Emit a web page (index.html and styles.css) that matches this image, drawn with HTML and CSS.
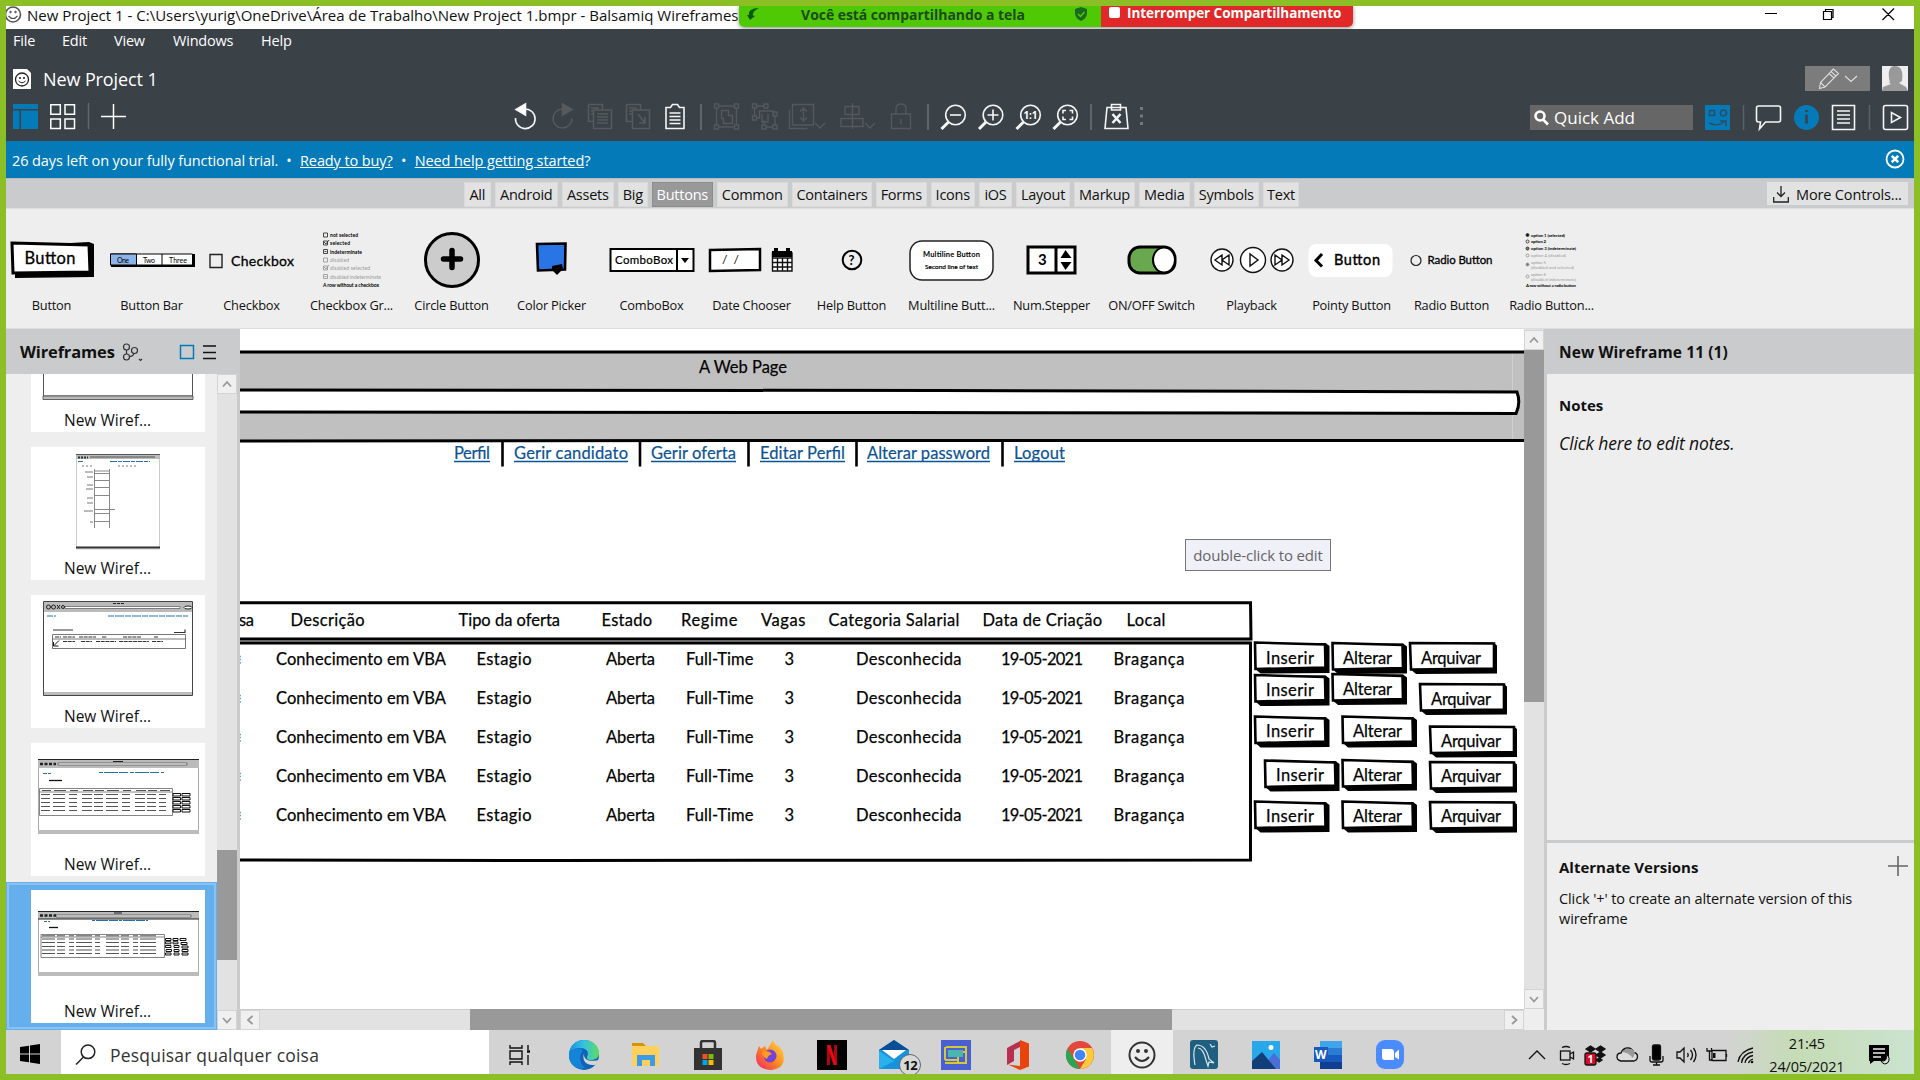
FILE: index.html
```html
<!DOCTYPE html>
<html lang="pt">
<head>
<meta charset="utf-8">
<title>New Project 1 - Balsamiq Wireframes</title>
<link rel="stylesheet" href="styles.css">
</head>
<body>
<div class="screen">

<div class="titlebar">
  <svg class="app-face" width="16" height="23" viewBox="6 6 16 23" fill="none" stroke="#555"><circle cx="13" cy="14.500" r="7.500" stroke-width="1.600"/><path d="M8.500 16q4.500 5 9 0" stroke-width="1.200"/><circle cx="10.500" cy="12" r=".8" fill="#555"/><circle cx="15.500" cy="12" r=".8" fill="#555"/></svg>
  <span class="title-text">New Project 1 - C:\Users\yurig\OneDrive\Área de Trabalho\New Project 1.bmpr - Balsamiq Wireframes</span>
  <div class="share">
    <div class="share-on">
      <svg width="14" height="14" viewBox="0 0 14 14"><path d="M13 1C6 1 2 4 3 8L1 8l3 5 5-4-2-.5C6.500 6 8 3.500 13 1z" fill="#0b5a0b"/></svg>
      <span>Você está compartilhando a tela</span>
      <svg width="14" height="16" viewBox="0 0 14 16"><path d="M7 1l6 2v5q-1 5-6 7-5-2-6-7V3z" fill="#1b6a1b"/><path d="M4 8l2.500 2.500L10.500 6" fill="none" stroke="#4fc90a" stroke-width="1.500"/></svg>
    </div>
    <div class="share-stop"><i></i><span>Interromper Compartilhamento</span></div>
  </div>
  <svg class="winctl" width="160" height="23" viewBox="1754 6 160 23" fill="none" stroke="#000" stroke-width="1.200"><path d="M1765 13.500h12M1823.500 11.500h8v8h-8zM1825.500 11V9.500h7.500v8h-1.500M1882.500 8.500l11.500 11.500M1894 8.500l-11.500 11.500"/></svg>
</div>

<header class="header">
  <nav class="menu"><span>File</span><span>Edit</span><span>View</span><span>Windows</span><span>Help</span></nav>
  <div class="project">
    <svg width="18" height="20" viewBox="0 0 18 20"><path d="M0 0h14l4 4v16H0z" fill="#fff"/><circle cx="9" cy="10.500" r="6.500" fill="none" stroke="#222" stroke-width="1.300"/><path d="M5.500 12q3.500 3.500 7 0" fill="none" stroke="#222"/><circle cx="7" cy="9" r=".9"/><circle cx="11" cy="9" r=".9"/></svg>
    <span class="project-name">New Project 1</span>
    <div class="pen"><svg width="40" height="22" viewBox="0 0 40 22" fill="none" stroke="#ddd" stroke-width="1.100"><path d="M1.500 20.500l1-6L13 3.500l5 4.500L7 19zM11 5.500l5 4.500M13 3.500l2.500-2.500 5 4.500L18 8M2.500 14.500L7 19M27 8l6 5.500L39 8"/></svg></div>
    <svg width="26" height="25" viewBox="0 0 26 25"><path d="M0 0h26v25H0z" fill="#eee"/><path d="M8 17Q4 0 13 0q9 0 7 15l-3 2 7 4 2 4H0l1-4 8-3-4-2z" fill="#999"/></svg>
  </div>
  <div class="toolbar">
    <svg class="tb-left" width="120" height="34" viewBox="10 100 120 34"><path d="M13 104h25v5H13zM13 110.500h6.500V129H13zM21 110.500h17V129H21z" fill="#057ab9"/><g fill="none" stroke="#fff" stroke-width="1.500"><path d="M50.800 104.800h9.500v9.500h-9.500zM65 104.800h9.500v9.500H65zM50.800 119h9.500v9.500h-9.500zM65 119h9.500v9.500H65zM113.500 104v25M101 116.500h25"/><path d="M88.500 103v26" stroke="#666"/></g></svg>
    <svg class="tb-mid" width="646" height="34" viewBox="506 100 646 34" fill="none" stroke="#f5f5f5" stroke-width="1.600">
      <path d="M515.500 118a9.800 9.800 0 1 0 9.500-9"/><path d="M525.500 104v11l-9.500-5.500z" fill="#fff"/>
      <g stroke="#565a5d"><path d="M572 118.500a9.500 9.500 0 1 1-9-9.500"/><path d="M562.500 104v11l9.500-5.500z" fill="#565a5d"/>
      <path d="M588.500 104.500h14v5M588.500 104.500v17h4M591 108h8M591 111h3M591 114h3M593.500 110h18v18.500h-18zM597 114h11M597 117h11M597 120h11M597 123h11"/>
      <path d="M626.500 104.500h14v5M626.500 104.500v17h5M629 108h8M629 111h4M629 114h4M632.500 110h17v18.500h-17zM638 114l7 9M645 117v6h-6"/></g>
      <path d="M666 107.500h4.500l2-3h5l2 3h4.500v21h-18zM669.500 113h11M669.500 116.500h11M669.500 120h11M669.500 123.500h11"/>
      <g stroke="#6a6f73"><path d="M701 104v26M928 104v26M1091 104v26"/></g>
      <g stroke="#54585c" stroke-width="1.400"><path d="M714.500 104h4v4h-4zM734.500 104h4v4h-4zM714.500 125h4v4h-4zM734.500 125h4v4h-4zM718.500 106h16M718.500 127h16M716.500 108v17M736.500 108v17M721.500 110.500h7v5h4v8h-9v-5h-2z"/>
      <path d="M752.500 104h4v4h-4zM764 104h4v4h-4zM752.500 116h4v4h-4zM756.500 106h7.500M754.500 108v8M756.500 118h3v-7h14v4M762 125h4v4h-4zM773 125h4v4h-4zM773 112h4v4h-4zM764 120v5M766 127h7M775 116v9M762 114v8h6v-8"/>
      <path d="M792.500 104.500h21V125h-21zM789.500 110v18.500h18M803.500 108v13M800 111.500l3.500-3.500 3.500 3.500M800 117.500l3.500 3.500 3.500-3.500M815 123l5 5 5-5"/>
      <path d="M852.500 103v26M845 106.500h14v8h-14zM841 118.500h22v8h-22zM865 123l5 5 5-5"/>
      <path d="M891.500 114h19v14.500h-19zM896 114v-5q0-5 5-5t5 5v5M901 119v5"/></g>
      <g><circle cx="955.500" cy="115" r="9.800"/><path d="M948.500 122l-7 7" stroke-width="3"/><path d="M950 115h11"/><circle cx="993" cy="115" r="9.800"/><path d="M986 122l-7 7" stroke-width="3"/><path d="M987.500 115h11M993 109.500v11"/><circle cx="1030.500" cy="115" r="9.800"/><path d="M1023.500 122l-7 7" stroke-width="3"/><circle cx="1067.500" cy="115" r="9.800"/><path d="M1060.500 122l-7 7" stroke-width="3"/><path d="M1066 110.500h-3v3M1069.500 110.500h3v3M1066 119.500h-3v-3M1069.500 119.500h3v-3"/></g>
      <text x="1023.500" y="118.500" textLength="14" font-size="10" font-weight="700" fill="#fff" stroke="none">1:1</text>
      <path d="M1107 107.500h19l2 21h-23zM1111.500 110v-5.500h9v5.500z"/><path d="M1112.500 114l8 9M1120.500 114l-8 9" stroke-width="2.600"/>
      <path d="M1141.500 107v3M1141.500 114.500v3M1141.500 122v3" stroke="#777" stroke-width="3"/>
    </svg>
    <div class="quick"><svg width="15" height="16" viewBox="0 0 15 16" fill="none" stroke="#fff" stroke-width="2.600"><circle cx="6" cy="6" r="4.500"/><path d="M9 9.500l5 5"/></svg><span>Quick Add</span></div>
    <svg class="tb-right" width="210" height="34" viewBox="1700 100 210 34" fill="none" stroke="#f5f5f5" stroke-width="1.600"><path d="M1705 105h25v25h-25z" fill="#057ab9" stroke="none"/><g stroke="#2d4d63"><path d="M1709.500 110.500h5v5h-5z"/><circle cx="1723.500" cy="113" r="3"/><path d="M1709 123q9 4 15-1M1720 121h6v5"/></g><path d="M1743.500 105v25M1869.500 105v25" stroke="#5b6064"/><path d="M1758.500 106h20q2 0 2 2v12q0 2-2 2h-13l-6 7 1-7h-2q-2 0-2-2v-12q0-2 2-2z"/><circle cx="1806.500" cy="117.500" r="12.500" fill="#057ab9" stroke="none"/><path d="M1806.500 114.500v9M1806.500 110v2" stroke="#39434a" stroke-width="2.600"/><path d="M1832.500 105.500h22v24h-22zM1837 111h13M1837 115h13M1837 119h13M1837 123h13"/><rect x="1883.500" y="105.500" width="24" height="24" rx="2"/><path d="M1891.500 112.500v10l9-5z"/></svg>
  </div>
</header>

<div class="trial"><span class="days">26 days left on your fully functional trial.</span><span class="dot">•</span><u>Ready to buy?</u><span class="dot">•</span><span><u>Need help getting started</u>?</span>
  <svg width="20" height="20" viewBox="0 0 20 20" fill="none" stroke="#fff"><circle cx="10" cy="10" r="8.500" stroke-width="1.800"/><path d="M6.800 6.800l6.400 6.400M13.200 6.800l-6.400 6.400" stroke-width="2.600"/></svg></div>

<div class="tabs">
  <div class="tab-list"><b>All</b><b>Android</b><b>Assets</b><b>Big</b><b class="on">Buttons</b><b>Common</b><b>Containers</b><b>Forms</b><b>Icons</b><b>iOS</b><b>Layout</b><b>Markup</b><b>Media</b><b>Symbols</b><b>Text</b></div>
  <div class="more"><svg width="16" height="17" viewBox="0 0 16 17" fill="none" stroke="#222" stroke-width="1.300"><path d="M8 0v10M4 6.500l4 4 4-4M.7 11v5h14.600v-5"/></svg><span>More Controls...</span></div>
</div>

<div class="palette">
  <div class="ctl"><svg viewBox="0 0 100 80"><path d="M14 58l79-1V24l-5-2-74 4z"/><path d="M11 23l77 2 1 27-77 1z" fill="#fff" stroke="#000" stroke-width="3"/><text x="23.500" y="44" textLength="51" font-size="16.500" stroke="#000" stroke-width=".3">Button</text></svg><span>Button</span></div>
  <div class="ctl"><svg viewBox="0 0 100 80"><path d="M10 34h84v13H10z"/><path d="M9.500 34h82v11h-82z" fill="#fff" stroke="#000"/><path d="M9.500 34h26v11h-26z" fill="#8db4ea" stroke="#000"/><path d="M61 34v11" stroke="#000"/><text x="16" y="42.500" textLength="12" font-size="7">One</text><text x="42" y="42.500" textLength="12" font-size="7">Two</text><text x="68" y="42.500" textLength="18" font-size="7">Three</text></svg><span>Button Bar</span></div>
  <div class="ctl"><svg viewBox="0 0 100 80"><path d="M9 34.500h12v13H9z" fill="none" stroke="#222" stroke-width="1.400"/><text x="30" y="45.500" textLength="63" font-size="14" stroke="#000" stroke-width=".3">Checkbox</text></svg><span>Checkbox</span></div>
  <div class="ctl"><svg viewBox="0 0 100 80"><g font-size="5" font-weight="700"><text x="29" y="17" textLength="28">not selected</text><text x="29" y="25" textLength="20">selected</text><text x="29" y="33.500" textLength="32">indeterminate</text><g fill="#999" font-weight="400"><text x="29" y="42" textLength="19">disabled</text><text x="29" y="50" textLength="40">disabled selected</text><text x="29" y="58.500" textLength="51">disabled indeterminate</text></g><text x="22" y="66.500" textLength="56">A row without a checkbox</text></g><g fill="none" stroke="#333" stroke-width=".9"><path d="M22.500 13h4v4h-4zM22.500 21h4v4h-4zM22.500 29.500h4v4h-4zM23 22l2 2 3-4M23.500 31.500h2"/><path d="M22.500 38h4v4h-4zM22.500 46h4v4h-4zM22.500 54.500h4v4h-4zM23 47l2 2 3-4M23.500 56.500h2" stroke="#999"/></g></svg><span>Checkbox Gr...</span></div>
  <div class="ctl"><svg viewBox="0 0 100 80"><circle cx="51" cy="40" r="26.500" fill="#ccc" stroke="#000" stroke-width="3"/><path d="M51 30.500v17M42.500 39h17" stroke="#000" stroke-width="5.500" stroke-linecap="round"/></svg><span>Circle Button</span></div>
  <div class="ctl"><svg viewBox="0 0 100 80"><path d="M36 24l28.500-.5-.5 26-27 1z" fill="#2a75e6" stroke="#000" stroke-width="2.600"/><path d="M51 46l10-2 1 5-6 6-5-5z"/></svg><span>Color Picker</span></div>
  <div class="ctl"><svg viewBox="0 0 100 80"><path d="M9.500 29h83v22h-83zM76 29v22" fill="#fff" stroke="#000" stroke-width="2"/><path d="M80 38h8l-4 5z"/><text x="14" y="44" textLength="58" font-size="11.500" stroke="#000" stroke-width=".2">ComboBox</text></svg><span>ComboBox</span></div>
  <div class="ctl"><svg viewBox="0 0 100 80"><path d="M9 30l50-1v21l-50 1z" fill="#fff" stroke="#000" stroke-width="2.500"/><text x="21" y="44" textLength="17" font-size="12">/ /</text><path d="M71.500 33h19.500v18H71.500zM71.500 38H91M71.500 42.500H91M71.500 47H91M76.500 38v13M81.500 38v13M86.500 38v13" fill="#fff" stroke="#111" stroke-width="1.400"/><path d="M71 31h20v6H71zM73 28h4v5h-4zM85 28h4v5h-4z"/></svg><span>Date Chooser</span></div>
  <div class="ctl"><svg viewBox="0 0 100 80"><circle cx="51" cy="40" r="9.300" fill="none" stroke="#000" stroke-width="2"/><text x="47.500" y="44.500" font-size="13" font-weight="700">?</text></svg><span>Help Button</span></div>
  <div class="ctl"><svg viewBox="0 0 100 80"><rect x="9" y="21" width="83" height="39" rx="12" fill="#fff" stroke="#222" stroke-width="1.500"/><text x="22" y="37" textLength="57" font-size="7.500" font-weight="700">Multiline Button</text><text x="24" y="49" textLength="53" font-size="6.500" stroke="#000" stroke-width=".2">Second line of text</text></svg><span>Multiline Butt...</span></div>
  <div class="ctl"><svg viewBox="0 0 100 80"><path d="M27 27h47v26H27zM55 27v26" fill="#fff" stroke="#000" stroke-width="3"/><path d="M59.500 38l5-8 6 8zM59.500 42h11l-6 8z"/><text x="37" y="45" font-size="15" font-weight="700">3</text></svg><span>Num.Stepper</span></div>
  <div class="ctl"><svg viewBox="0 0 100 80"><rect x="28" y="27" width="46" height="26" rx="11" fill="#6aa84f" stroke="#000" stroke-width="3"/><ellipse cx="63" cy="40" rx="11" ry="12.500" fill="#fff" stroke="#000" stroke-width="2"/></svg><span>ON/OFF Switch</span></div>
  <div class="ctl"><svg viewBox="0 0 100 80"><g fill="#fff" stroke="#111" stroke-width="1.400"><circle cx="21" cy="40" r="11"/><circle cx="52" cy="40" r="12.500"/><circle cx="81" cy="40" r="11"/><path d="M21 35v10l-7-5zM28 35v10l-7-5zM49 34v12l8-6zM74 35v10l7-5zM81 35v10l7-5z"/></g></svg><span>Playback</span></div>
  <div class="ctl"><svg viewBox="0 0 100 80"><rect x="7.500" y="24" width="84" height="33" rx="8" fill="#fff"/><path d="M21 34l-6 6.500 6 6" fill="none" stroke="#000" stroke-width="3"/><text x="33" y="44.500" textLength="46" font-size="14.500" stroke="#000" stroke-width=".4">Button</text></svg><span>Pointy Button</span></div>
  <div class="ctl"><svg viewBox="0 0 100 80"><circle cx="15" cy="40.500" r="5" fill="none" stroke="#222" stroke-width="1.200"/><text x="26.500" y="44" textLength="65" font-size="11.500" stroke="#000" stroke-width=".3">Radio Button</text></svg><span>Radio Button</span></div>
  <div class="ctl"><svg viewBox="0 0 100 80"><g font-size="4.300" font-weight="700"><text x="30" y="16.500" textLength="34">option 1 (selected)</text><text x="30" y="23" textLength="15">option 2</text><text x="30" y="30" textLength="45">option 3 (indeterminate)</text><g fill="#999" font-weight="400"><text x="30" y="37" textLength="35">option 4 (disabled)</text><text x="30" y="43.500" textLength="15">option 5</text><text x="30" y="48.500" textLength="43">(disabled and selected)</text><text x="30" y="55.500" textLength="15">option 6</text><text x="30" y="60.500" textLength="45">(disabled indeterminate)</text></g><text x="25" y="66.500" textLength="50">A row without a radio button</text></g><g fill="none" stroke="#333" stroke-width=".9"><circle cx="26.500" cy="15" r="1.500" fill="#111"/><circle cx="26.500" cy="21.500" r="1.500"/><circle cx="26.500" cy="28.500" r="1.500" fill="#777"/></g><g fill="none" stroke="#999" stroke-width=".9"><circle cx="26.500" cy="35.500" r="1.500"/><circle cx="26.500" cy="44.500" r="1.500" fill="#777"/><circle cx="26.500" cy="56.500" r="1.500"/></g></svg><span>Radio Button...</span></div>
</div>

<div class="main">
  <aside class="left">
    <div class="left-head"><span>Wireframes</span><svg width="100" height="24" viewBox="120 339 100 24" fill="none" stroke="#333" stroke-width="1.200"><circle cx="126.500" cy="346" r="3"/><circle cx="134.500" cy="349.500" r="3"/><circle cx="126.500" cy="356" r="3"/><path d="M126.500 349v4M134 352.500q-1 3-5 3M139 358l1.500 1.500 1.500-1.500"/><path d="M180.500 344.500h13v13h-13z" stroke="#057ab9" stroke-width="1.500"/><path d="M203 345h13M203 351.500h13M203 357.500h13" stroke="#111" stroke-width="1.600"/></svg></div>
    <div class="left-body">
      <div class="thumbs">
        <div class="item"><div class="card"><svg width="174" height="104" viewBox="31 299 174 104"><path d="M43.500 299v97h149v-97" fill="none" stroke="#555"/><path d="M43 396h150v3.500H43z" fill="#bbb" stroke="#444" stroke-width=".8"/></svg><span>New Wiref...</span></div></div>
        <div class="item"><div class="card"><svg width="174" height="104" viewBox="31 447 174 104" fill="none"><path d="M76.500 454v95h83v-95" stroke="#ccc"/><path d="M76 454h84v5H76z" fill="#bbb"/><path d="M76 454.500h84M90 457h65" stroke="#555"/><path d="M78 457.500h10" stroke="#333" stroke-width="2" stroke-dasharray="2 1"/><path d="M78 461.500h5M110 461.500h40" stroke="#2471b0" stroke-dasharray="7 1 4 1"/><path d="M82 466h11M118 466h20" stroke="#777" stroke-dasharray="2 2"/><path d="M94.500 469v59M109.500 469v59M94 471h16M94 473.500h16M94 480.500h16M94 487.500h16M94 495.500h16M94 509.500h21M94 513.500h16M94 521.500h16" stroke="#888"/><path d="M85 472h8M87 477h6M87 485h6M86 489h7M87 498h6M87 503h6M84 511h9M90 522h3" stroke="#777" stroke-width="1.200"/><path d="M76 547.500h84" stroke="#333" stroke-width="2"/></svg><span>New Wiref...</span></div></div>
        <div class="item"><div class="card"><svg width="174" height="104" viewBox="31 595 174 104" fill="none"><path d="M43.500 601.500h149v94h-149z" stroke="#444"/><path d="M44 602h148v10H44zM44 692h148v3H44z" fill="#bbb"/><path d="M65 606.500h115v2H65z" fill="#fff" stroke="#555" stroke-width=".7"/><g stroke="#222"><circle cx="48.500" cy="607" r="2"/><circle cx="53.500" cy="607" r="2"/><path d="M57 605l3 4M60 605l-3 4"/><circle cx="63" cy="607" r="1.500"/><ellipse cx="188" cy="607.500" rx="4" ry="1.500" fill="#fff"/><path d="M113 603.500h11" stroke-dasharray="3 1"/></g><path d="M47 616h9M108 616h80" stroke="#2471b0" stroke-dasharray="6 1 9 1"/><path d="M53 630h20M174 632.500h11v-3" stroke="#333" stroke-width="1.200"/><path d="M52.500 634.500h133v14h-133zM52 639h134" stroke="#555" stroke-width=".8"/><path d="M55 637h6M63 637h12M79 637h17M102 637h5M123 637h18M154 637h4M63 641.500h12M81 641.500h11M96 641.500h20M119 641.500h30M152 641.500h11" stroke="#333" stroke-dasharray="4 .7"/><path d="M54 645.500l5-5M53.500 642v4h5" stroke="#111"/></svg><span>New Wiref...</span></div></div>
        <div class="item"><div class="card"><svg width="174" height="104" viewBox="31 742 174 104" fill="none"><path d="M38.500 758.500h160v74h-160z" stroke="#aaa"/><path d="M38 759h161v8H38zM38 829h161v4H38z" fill="#bbb"/><path d="M38 758.500h161M113 760.500h10" stroke="#222"/><path d="M58 762h129v2H58z" fill="#fff" stroke="#444" stroke-width=".7"/><path d="M40 763h16" stroke="#222" stroke-width="2.500" stroke-dasharray="3 1.500"/><path d="M43 772.500h8M99 771.500h65" stroke="#2471b0" stroke-dasharray="4 1 14 1 9 2"/><path d="M49 779.500h13" stroke="#111" stroke-width="1.300"/><path d="M39.500 787.500h133v27h-133zM39 791h133" stroke="#666" stroke-width=".8"/><g stroke="#555" stroke-dasharray="9 3 12 4 8 5 10 2"><path d="M42 789.500h128"/><path d="M41 793.500h125M41 797.500h125M41 801.500h125M41 805.500h125M41 809.500h125"/></g><g fill="#fff" stroke="#111"><path d="M173 792.500h7.500v2.500H173zM182 792.500h8v2.500h-8zM173 796.500h7.500v2.500H173zM182 796.500h8v2.500h-8zM173 800.500h7.500v2.500H173zM182 800.500h8v2.500h-8zM173 804.500h7.500v2.500H173zM182 804.500h8v2.500h-8zM173 808.500h7.500v2.500H173zM182 808.500h8v2.500h-8z"/></g></svg><span>New Wiref...</span></div></div>
        <div class="item sel"><div class="card"><svg width="174" height="104" viewBox="31 890 174 104" fill="none"><path d="M38.500 911.500h160v64h-160z" stroke="#aaa"/><path d="M38 912h161v7H38zM38 972h161v4H38z" fill="#bbb"/><path d="M38 911.500h161M114 913h8M38 919h161" stroke="#222"/><path d="M56 915h135v2H56z" fill="#fff" stroke="#444" stroke-width=".7"/><path d="M40 915.500h16" stroke="#222" stroke-width="2.500" stroke-dasharray="3 1.500"/><path d="M44 921.500h6M92 920.500h56" stroke="#2471b0" stroke-dasharray="3 1 12 1 9 1"/><path d="M49 927.500h9" stroke="#111" stroke-width="1.300"/><path d="M41 934.500h123.500v23H41zM41 937h123" stroke="#666" stroke-width=".8"/><g stroke="#555" stroke-dasharray="13 2 8 4 5 2 16 3 5 6"><path d="M42 935.800h116"/><path d="M42 939h116M42 942.500h116M42 946.500h116M42 950h116M42 953.500h116"/></g><g fill="#fff" stroke="#111"><path d="M165.500 938.500h5.500v2h-5.500zM173 938.500h5v2h-5zM180 938.500h6v2h-6zM165.500 941.800h5.500v2h-5.500zM173 941.800h5v2h-5zM181 942.500h6v2h-6zM165.500 945.500h5.500v2h-5.500zM174 945.500h5v2h-5zM182 946h6v2h-6zM166 949.500h5.500v2H166zM174 949.500h5v2h-5zM182 949.500h6v2h-6zM165.500 953h5.500v2h-5.500zM174 953h5v2h-5zM182 953h6v2h-6z"/></g></svg><span>New Wiref...</span></div></div>
      </div>
      <div class="vbar lbar"><div class="sb"><svg viewBox="0 0 12 12"><path d="M2 8.500l4-4.500 4 4.500"/></svg></div><div class="lthumb"></div><div class="sb"><svg viewBox="0 0 12 12"><path d="M2 4l4 4.500L10 4"/></svg></div></div>
    </div>
  </aside>

  <section class="stage">
    <svg class="board" width="1284" height="680" viewBox="240 329 1284 680" font-size="16.500">
      <path d="M240 352h1284v88.500H240z" fill="#c0c0c0"/>
      <path d="M1512.500 352v88" stroke="#cfcfcf"/>
      <path d="M230 390l710 .5 577 1.500q4 11-1 21.500L900 412.500 230 412z" fill="#fff" stroke="#000" stroke-width="3"/>
      <path d="M240 352h1284M240 441l500-.5h784" fill="none" stroke="#000" stroke-width="3"/>
      <g class="ink"><text x="699" y="373" textLength="88">A Web Page</text></g>
      <g class="link"><text x="454" y="459" textLength="36">Perfil</text><text x="514" y="459" textLength="114">Gerir candidato</text><text x="651" y="459" textLength="85">Gerir oferta</text><text x="760" y="459" textLength="85">Editar Perfil</text><text x="867" y="459" textLength="123">Alterar password</text><text x="1014" y="459" textLength="51">Logout</text></g>
      <path d="M454 461.500h36M514 461.500h114M651 461.500h85M760 461.500h85M867 461.500h123M1014 461.500h51" stroke="#0b5394" stroke-width="1.300"/>
      <path d="M502.500 442v24.500M640 442v24.500M748.500 442v24.500M856.500 442v24.500M1002.500 442v24.500" stroke="#000" stroke-width="2.600"/>
      <g fill="none" stroke="#000" stroke-width="3"><path d="M230 602.700h1020.500l.5 36.300H230M230 643h1020.500V860l-700 .5-320-.5"/></g><path d="M240 641h1010" stroke="#555"/>
      <g class="ink">
      <text x="239" y="626" textLength="15">sa</text><text x="290.500" y="626" textLength="74">Descrição</text><text x="458.500" y="626" textLength="101.500">Tipo da oferta</text><text x="601.500" y="626" textLength="50.500">Estado</text><text x="681" y="626" textLength="56.500">Regime</text><text x="761" y="626" textLength="44.500">Vagas</text><text x="828.500" y="626" textLength="131">Categoria Salarial</text><text x="982.500" y="626" textLength="119.500">Data de Criação</text><text x="1126.500" y="626" textLength="39">Local</text>
      </g>
      <defs><g id="row" class="ink"><text x="276" y="0" textLength="170">Conhecimento em VBA</text><text x="476.500" y="0" textLength="55">Estagio</text><text x="606" y="0" textLength="49">Aberta</text><text x="686" y="0" textLength="67.500">Full-Time</text><text x="784.500" y="0">3</text><text x="856" y="0" textLength="105.500">Desconhecida</text><text x="1001" y="0" textLength="82">19-05-2021</text><text x="1113.500" y="0" textLength="71">Bragança</text><path d="M240 -8h1M240 -5h1M240 -1.500h1" stroke="#5aa7d8" stroke-width="1.500"/></g>
      <g id="bi"><path d="M3 29l4 3.500 69-.5V5l-4-3H3z"/><path d="M1.500 1.500l70 2 .5 23-70 1.500z" fill="#fff" stroke="#000" stroke-width="2.600"/></g>
      <g id="bq"><path d="M3 29l4 3.500 81-.5V4l-4-3H3z"/><path d="M1 1.500l84 .5v25l-83 1z" fill="#fff" stroke="#000" stroke-width="2.600"/></g></defs>
      <use href="#row" y="664.500"/><use href="#row" y="703.500"/><use href="#row" y="742.500"/><use href="#row" y="781.500"/><use href="#row" y="820.500"/>
      <use href="#bi" x="1253.500" y="641"/><use href="#bi" x="1331" y="641.500"/><use href="#bq" x="1409" y="641.500"/>
      <use href="#bi" x="1253.500" y="673.500"/><use href="#bi" x="1331" y="672.500"/><use href="#bq" x="1419" y="682.500"/>
      <use href="#bi" x="1253.500" y="715"/><use href="#bi" x="1341" y="715"/><use href="#bq" x="1429" y="725"/>
      <use href="#bi" x="1263.500" y="759"/><use href="#bi" x="1341" y="758.500"/><use href="#bq" x="1429" y="760.500"/>
      <use href="#bi" x="1253.500" y="800"/><use href="#bi" x="1341" y="800"/><use href="#bq" x="1429" y="800.500"/>
      <g class="ink">
      <text x="1266" y="663.500" textLength="48">Inserir</text><text x="1343" y="663.500" textLength="49">Alterar</text><text x="1421" y="663.500" textLength="60">Arquivar</text>
      <text x="1266" y="695.500" textLength="48">Inserir</text><text x="1343" y="694.500" textLength="49">Alterar</text><text x="1431" y="704.500" textLength="60">Arquivar</text>
      <text x="1266" y="736.500" textLength="48">Inserir</text><text x="1353" y="736.500" textLength="49">Alterar</text><text x="1441" y="746.500" textLength="60">Arquivar</text>
      <text x="1276" y="780.500" textLength="48">Inserir</text><text x="1353" y="780.500" textLength="49">Alterar</text><text x="1441" y="781.500" textLength="60">Arquivar</text>
      <text x="1266" y="821.500" textLength="48">Inserir</text><text x="1353" y="821.500" textLength="49">Alterar</text><text x="1441" y="821.500" textLength="60">Arquivar</text>
      </g>
    </svg>
    <div class="tip">double-click to edit</div>
    <div class="vbar cbar"><div class="sb"><svg viewBox="0 0 12 12"><path d="M2 8.500l4-4.500 4 4.500"/></svg></div><div class="cthumb"></div><div class="sb"><svg viewBox="0 0 12 12"><path d="M2 4l4 4.500L10 4"/></svg></div></div>
    <div class="hbar"><div class="sb"><svg viewBox="0 0 12 12"><path d="M8.500 2L4 6l4.500 4"/></svg></div><div class="hthumb"></div><div class="sb"><svg viewBox="0 0 12 12"><path d="M4 2l4.500 4L4 10"/></svg></div></div>
    <div class="corner"></div>
  </section>

  <aside class="right">
    <div class="right-head">New Wireframe 11 (1)</div>
    <div class="notes"><h3>Notes</h3><em>Click here to edit notes.</em></div>
    <div class="alts"><div class="alts-head"><h3>Alternate Versions</h3><svg width="20" height="20" viewBox="0 0 20 20" stroke="#666" stroke-width="1.600"><path d="M10 0v20M0 10h20"/></svg></div><p>Click '+' to create an alternate version of this<br>wireframe</p></div>
  </aside>
</div>

<div class="taskbar">
  <div class="start"><svg width="20" height="20" viewBox="0 0 20 20"><path d="M0 3l9-1.300v7.800H0zM10 1.500L20 0v9.500H10zM0 10.500h9v7.800L0 17zM10 10.500h10V20l-10-1.500z"/></svg></div>
  <div class="search"><svg width="21" height="21" viewBox="0 0 21 21" fill="none" stroke="#222" stroke-width="1.500"><circle cx="13" cy="7.800" r="6.800"/><path d="M8.500 13L1 20.500"/></svg><span>Pesquisar qualquer coisa</span></div>
  <div class="apps">
    <div><svg width="22" height="22" viewBox="0 0 22 22" fill="none" stroke="#111" stroke-width="1.400"><path d="M1 1v3h12V1M1 7h12v8H1zM1 21v-3h12v3M19 1v5M19 11v10"/><path d="M18 7.500h3" stroke-width="2.500"/></svg></div>
    <div><svg viewBox="0 0 30 30"><defs><linearGradient id="e" x1="0" x2="1"><stop offset="0" stop-color="#1b8fe0"/><stop offset=".5" stop-color="#34c3e0"/><stop offset="1" stop-color="#5fdc5f"/></linearGradient></defs><circle cx="15" cy="15" r="15" fill="#0f62b8"/><path d="M0 14C1 5 7 0 15 0c9 0 15 6 15 13 0 5-4 7-8 7-3 0-5-1-4-3 3-6-2-9-7-9C5 8 1 11 0 14z" fill="url(#e)"/><path d="M0 14c2-6 12-8 14-3-4 3-4 12 2 17-8 3-17-4-16-14z" fill="#1484d6"/><path d="M15.500 12c-2 6 2 10 12 8.500l2-.5-2 4.500c-8 2-14-2-13-9z" fill="#d6d6d6"/></svg></div>
    <div><svg viewBox="0 0 30 30"><path d="M1 3h11l3 3H1z" fill="#d69500"/><path d="M1 6h27v20H1z" fill="#ffd05c"/><path d="M6 26V15h18v11h-5v-6h-8v6z" fill="#3a9be8"/></svg></div>
    <div><svg viewBox="0 0 30 30"><path d="M8 8V3q0-2 2-2h10q2 0 2 2v5" fill="none" stroke="#333" stroke-width="2.500"/><path d="M1 8h28v22H1z" fill="#333"/><path d="M9.500 14h5v5h-5z" fill="#f25022"/><path d="M15.500 14h5v5h-5z" fill="#7fba00"/><path d="M9.500 20h5v5h-5z" fill="#00a4ef"/><path d="M15.500 20h5v5h-5z" fill="#ffb900"/></svg></div>
    <div><svg viewBox="0 0 30 30"><defs><linearGradient id="f" x1="1" y1="0" x2="0" y2="1"><stop offset="0" stop-color="#ffe14a"/><stop offset=".5" stop-color="#ff8a1e"/><stop offset="1" stop-color="#f0206a"/></linearGradient></defs><path d="M18 0q2 6 6 6l4 6q4 17-13 18Q0 29 1 15L4 6l2 3 4-3 2 4z" fill="url(#f)"/><circle cx="15" cy="16" r="6.500" fill="#7542d8"/><path d="M7 12q6-3 10 2-4 1-5 5-5-2-5-7z" fill="#ff9a24"/></svg></div>
    <div><svg viewBox="0 0 30 30"><path d="M0 0h30v30H0z"/><path d="M11.500 5v20M18.500 5v20" stroke="#b1060f" stroke-width="3"/><path d="M10 5h3.500L20 25h-3.500z" fill="#e50914"/></svg></div>
    <div class="mail"><svg viewBox="0 0 30 30"><path d="M0 10L15 0l15 10v19H0z" fill="#1593dd"/><path d="M0 10L15 0l15 10z" fill="#0a4f96"/><path d="M3 10h24L15 19z" fill="#fff"/><path d="M0 11l15 10L0 29z" fill="#2bb0ee"/></svg><i>12</i></div>
    <div><svg viewBox="0 0 30 30" fill="none" stroke="#d5c83b" stroke-width="2"><path d="M0 0h30v30H0z" fill="#4a5fd0" stroke="none"/><path d="M5 7h20v4M4 20V7M4 20h12M4 23h12M17 12h8v11h-8z"/><path d="M7 10h15v7H7z" fill="#49b7b0" stroke="none"/></svg></div>
    <div><svg viewBox="0 0 30 30"><path d="M4 8L17 1v6l-6 3v11l-7 4z" fill="#b83050"/><path d="M17 0l9 3.500v23L17 30 5 24.500l12 1.500z" fill="#e8440c"/></svg></div>
    <div><svg viewBox="0 0 30 30"><circle cx="15" cy="15" r="14" fill="#e0493c"/><path d="M2.500 8.500L9 19l6 10A14 14 0 0 1 2.500 8.500z" fill="#2aa652"/><path d="M15 8h12a14 14 0 0 1-12 21l6-10z" fill="#fccb3a"/><circle cx="15" cy="15" r="6.800" fill="#fff"/><circle cx="15" cy="15" r="5.300" fill="#4285f4"/></svg></div>
    <div class="active"><svg viewBox="0 0 30 30" fill="none" stroke="#333" stroke-width="2"><circle cx="15" cy="15" r="12.500"/><path d="M8 17q7 8 14 0"/><circle cx="11" cy="11" r="1" fill="#333"/><circle cx="19" cy="11" r="1" fill="#333"/></svg></div>
    <div><svg viewBox="0 0 30 30"><rect x="1" width="28" height="29" rx="3" fill="#205f80"/><path d="M6 25Q3 8 8 5q9 0 12 14l5 4-5-1-1 4-2-6Q14 8 9 8M21 4l2 3 3-1" fill="none" stroke="#d8e8f0" stroke-width="1.200"/></svg></div>
    <div><svg viewBox="0 0 30 30"><path d="M1 1h28v28H1z" fill="#28a8ea"/><path d="M18 19l5-6 6 7v9H14z" fill="#4a6fd8"/><path d="M1 21l10-9 14 17H1z" fill="#123e7a"/><circle cx="20" cy="7.500" r="2.500" fill="#fff"/></svg></div>
    <div><svg viewBox="0 0 30 30"><path d="M7 1h22v7H7z" fill="#41a5ee"/><path d="M7 8h22v7H7z" fill="#2b7cd3"/><path d="M7 15h22v7H7z" fill="#185abd"/><path d="M7 22h22v7H7z" fill="#103f91"/><path d="M1 7h14v15H1z" fill="#185abd"/><text x="2" y="19" font-size="12" font-weight="700" fill="#fff">W</text></svg></div>
    <div><svg viewBox="0 0 30 30"><rect x="1" y="0" width="28" height="29" rx="9" fill="#4a8cff"/><path d="M7 9h9q3 0 3 3v8h-9q-3 0-3-3zM20 13l4-3.500v10L20 17z" fill="#fff"/></svg></div>
  </div>
  <div class="tray">
    <svg viewBox="0 0 30 30"><path d="M7 19l8-8 8 8"/></svg>
    <svg viewBox="0 0 30 30"><rect x="8.500" y="11" width="9.500" height="9"/><path d="M18 14l3.500-2v7L18 17M10 7.500q4-2 8 0M10 23.500q4 2 8 0"/></svg>
    <svg viewBox="0 0 30 30" stroke="none"><path d="M4 9l4.500-3L13 9l-4.500 3zM14 9l4.500-3L23 9l-4.500 3zM14 15l4.500-3 4.500 3-4.500 3zM14 20l3-2 3 2-3 2z" fill="#111"/><rect x="3" y="13" width="11" height="12" rx="2" fill="#d80b28"/><text class="count" x="5.500" y="23">1</text></svg>
    <svg viewBox="0 0 30 30"><path d="M9 21q-4-1-4-4 0-4 4-4 2-5 7-5 4 0 5.500 4.500 4 .5 4 4T22 21z" fill="#ddd"/><path d="M10 12q6 0 11 6l2-5-3-4-6-.5z" fill="#999" stroke="none"/></svg>
    <svg viewBox="0 0 30 30"><rect x="10.500" y="5" width="8" height="15" rx="1.500" fill="#000"/><path d="M8 16v4q0 2 2 2h9q2 0 2-2v-4M14.500 22v3M11 25h7"/></svg>
    <svg viewBox="0 0 30 30"><path d="M5 12h3l4-4v14l-4-4H5zM15.500 13q1.500 2 0 4M18.500 10q4 5 0 10M21.500 8q5 7 0 14"/></svg>
    <svg viewBox="0 0 30 30"><path d="M10 10.500h14v10H10zM24.500 14v3M5 8v3h4.500V8M7.500 11v9h3"/><path d="M11 13h2.500v5H11z" fill="#111" stroke="none"/></svg>
    <svg viewBox="0 0 30 30" stroke-width="1.200"><path d="M6 22Q8 11 21 8M9.500 23q1-9 11.500-11M13 23q1-6 8-7.500M16.500 23q1-3 4.500-4"/><circle cx="20" cy="22" r="1.300" fill="#111" stroke="none"/></svg>
  </div>
  <div class="clock"><span>21:45</span><span>24/05/2021</span></div>
  <svg class="notif" width="22" height="22" viewBox="0 0 22 22"><path d="M1 1h20v16H6l-4 3v-3H1z"/><path d="M5 5h12M5 9h12M5 13h8" stroke="#eee" stroke-width="1.400"/><path d="M18 10q2 8-5 7 3 5 7 1.500Q23 14 18 10z" fill="#d5ddd5" stroke="#000" stroke-width="1"/></svg>
</div>
</div>
</body>
</html>
```
FILE: styles.css
```css
* { box-sizing: border-box; }
body { margin: 0; font-family: "Open Sans", "Noto Sans", sans-serif; color: #111; }
svg { display: block; flex: none; }
.screen { width: 1920px; height: 1080px; border: 6px solid #8cbf26; display: flex; flex-direction: column; overflow: hidden; background: #eee; white-space: nowrap; }
.screen > div, .screen > header { flex: none; }

.titlebar { height: 23px; background: #fff; display: flex; }
.title-text { margin-left: 5px; width: 712px; font-size: 15px; line-height: 19px; overflow: hidden; }
.share { display: flex; height: 21px; border-radius: 0 0 5px 5px; overflow: hidden; box-shadow: 0 1px 4px #888; color: #fff; font-weight: 700; }
.share-on { width: 362px; background: #4fc904; display: flex; align-items: center; justify-content: space-between; padding: 0 13px 5px 7px; font-size: 14px; letter-spacing: -0.05px; color: #1d4a1d; }
.share-on span { margin-right: 8px; }
.share-stop { width: 252px; background: #e02828; display: flex; align-items: center; padding: 0 0 8px 8px; gap: 7px; font-size: 13.500px; letter-spacing: -0.05px; }
.share-stop i { width: 11px; height: 11px; border-radius: 2px; background: #fff; }
.winctl { margin-left: auto; }

.header { height: 112px; background: #3a4147; color: #fff; display: flex; flex-direction: column; }
.menu { height: 27px; padding-left: 7px; display: grid; grid-template-columns: 49px 52px 59px 88px 60px; font-size: 14.500px; letter-spacing: -0.2px; line-height: 24px; }
.project { height: 44px; display: flex; align-items: center; padding: 1px 6px 0 7px; }
.project-name { margin-left: 12px; font-size: 18px; letter-spacing: -0.1px; }
.pen { margin: 0 12px 0 auto; width: 65px; height: 25px; background: #7c7c7c; display: flex; align-items: center; justify-content: center; }
.toolbar { display: flex; height: 34px; }
.tb-left { margin-left: 4px; }
.tb-mid { margin-left: 376px; font-family: "Open Sans", sans-serif; }
.quick { margin: 5px 7px 0 378px; width: 163px; height: 25px; background: #666; display: flex; align-items: center; gap: 5px; padding-left: 4px; font-size: 17px; letter-spacing: 0; }

.trial { height: 37px; background: #057ab9; color: #fff; display: flex; align-items: center; padding: 1px 9px 0 6px; font-size: 14.500px; letter-spacing: -0.1px; }
.trial .days { width: 266px; }
.trial .dot { width: 22px; text-align: center; }
.trial .dot { margin: 0 0 0 0; }
.trial svg { margin: -2px 0 0 auto; }

.tabs { height: 31px; background: #c9cbcd; border-top: 1px solid #bbb; border-bottom: 1px solid #ddd; display: flex; padding: 3px 6px 0 458px; }
.tab-list { display: grid; grid-template-columns: 26.500px 63.500px 51.500px 30.500px 60.500px 71.500px 80px 50.500px 44.500px 33px 54px 61px 50.500px 65.500px 36px; gap: 4px; height: 23px; }
.tab-list b { font-weight: 400; font-size: 14.500px; letter-spacing: -0.25px; line-height: 23px; text-align: center; background: #e2e2e2; border: 1px solid #dadada; }
.tab-list .on { background: #999; color: #fff; border-color: #8c8c8c; }
.more { margin-left: auto; width: 141px; height: 23px; background: #e2e2e2; display: flex; align-items: center; gap: 7px; padding: 1px 0 0 6px; font-size: 14.500px; letter-spacing: -0.15px; }

.palette { height: 120px; background: #eee; border-bottom: 1px solid #ddd; border-left: 5px solid #8cbf26; display: grid; grid-template-columns: repeat(16, 100px); margin-left: -5px; width: 1913px; padding-top: 11px; }
.ctl { margin-left: -5px; width: 100px; }
.ctl svg { width: 100px; height: 80px; font-family: Lato, sans-serif; }
.ctl span { display: block; padding-left: 1px; text-align: center; font-size: 12.800px; letter-spacing: -0.22px; line-height: 20px; margin-top: -5px; }

.main { height: 701px; display: flex; }
.left { width: 234px; border-right: 3px solid #c9cbcd; display: flex; flex-direction: column; }
.left-head { height: 45px; background: #c9cbcd; display: flex; align-items: center; padding-left: 14px; font-size: 16.500px; font-weight: 700; letter-spacing: -0.15px; }
.left-head span { width: 100px; }
.left-body { height: 656px; display: flex; }
.thumbs { width: 211px; overflow: hidden; display: flex; flex-direction: column; justify-content: flex-end; }
.item { flex: none; height: 147.750px; padding: 8px 11px 6.750px 25px; }
.sel { background: #66afed; box-shadow: inset 0 0 0 1px #66afed, inset 0 0 0 3px #8cc2ef; }
.card { width: 174px; height: 133px; background: #fff; display: flex; flex-direction: column; }
.card span { padding: 6px 0 0 33px; font-size: 15.500px; line-height: 23px; letter-spacing: 0; }

.sb { width: 20px; height: 20px; background: #f0f0f0; border: 1px solid #d4d4d4; display: flex; align-items: center; justify-content: center; flex: none; }
.sb svg { width: 12px; height: 12px; fill: none; stroke: #999; stroke-width: 1.800; }
.vbar { background: #e2e2e2; display: flex; flex-direction: column; }
.vbar .sb:last-child, .hbar .sb:last-child { margin: auto 0 0 auto; }
.lbar { width: 20px; }
.lthumb { height: 110px; margin-top: 456px; background: #999; }

.stage { position: relative; width: 1304px; display: grid; grid-template-columns: 1284px 20px; grid-template-rows: 680px 21px; background: #fff; }
.board { font-family: Lato, sans-serif; background: #fff; }
.ink { stroke: #111; stroke-width: 0.25px; }
.link { fill: #0b5394; stroke: #0b5394; stroke-width: 0.2px; }
.tip { position: absolute; left: 945px; top: 210px; width: 146px; height: 32px; border: 1px solid #777; background: #f0f0f8; color: #666; font-size: 15px; letter-spacing: -0.15px; line-height: 31px; text-align: center; }
.cbar { padding-top: 1px; }
.cthumb { height: 352px; background: #999; }
.hbar { background: #e2e2e2; display: flex; border-top: 1px solid #ccc; }
.hthumb { width: 702px; margin: -1px 0 0 210px; background: #999; }
.corner { background: #eee; }

.right { width: 370px; border-left: 3px solid #c9cbcd; display: flex; flex-direction: column; }
.right-head { height: 45px; background: #c9cbcd; padding-left: 12px; font-weight: 700; font-size: 15.500px; letter-spacing: 0.1px; line-height: 47px; }
.right h3 { margin: 0; font-size: 15px; line-height: 22px; letter-spacing: 0; }
.notes { height: 469px; padding: 20px 12px; border-bottom: 3px solid #c9cbcd; }
.notes em { display: block; margin-top: 15px; font-size: 17.500px; line-height: 24px; letter-spacing: -0.15px; }
.alts { padding: 13px 6px 0 12px; font-size: 14.500px; }
.alts-head { display: flex; justify-content: space-between; }
.alts p { margin: 11px 0 0; line-height: 20px; letter-spacing: -0.1px; }

.taskbar { height: 44px; background: linear-gradient(90deg, #d3d3d3 0 1720px, #c5dcb5 1790px, #cbe2d0); display: flex; align-items: center; }
.start { width: 55px; padding: 3px 0 0 14px; }
.search { width: 428px; height: 44px; background: #fff; display: flex; align-items: center; padding: 5px 0 0 14px; gap: 14px; color: #333; font-size: 17.500px; letter-spacing: 0.2px; }
.apps { display: grid; grid-template-columns: 64.500px repeat(14, 61.960px); height: 44px; }
.apps > div { display: flex; align-items: center; justify-content: center; padding-top: 6px; position: relative; }
.apps > div > svg { width: 30px; height: 30px; font-family: "Open Sans", sans-serif; }
.apps > div:first-child { padding-right: 3px; }
.apps > div:first-child > svg { width: 22px; height: 22px; }
.apps > .active { background: #eee; }
.mail i { position: absolute; left: 36px; top: 24px; width: 22px; height: 22px; border: 1px solid #666; border-radius: 11px; background: #d8d8d8; font: 700 13px/20px "Open Sans", sans-serif; text-align: center; letter-spacing: -0.5px; }
.tray { margin: 6px 0 0 101px; display: flex; }
.tray svg { width: 30px; height: 30px; fill: none; stroke: #111; stroke-width: 1.300; }
.tray .count { font-size: 10.500px; font-weight: 700; fill: #fff; stroke: none; }
.clock { width: 90px; text-align: center; font-size: 14.500px; letter-spacing: -0.2px; line-height: 23px; display: flex; flex-direction: column; padding-top: 5px; }
.notif { margin: 6px 0 0 16px; }
```
